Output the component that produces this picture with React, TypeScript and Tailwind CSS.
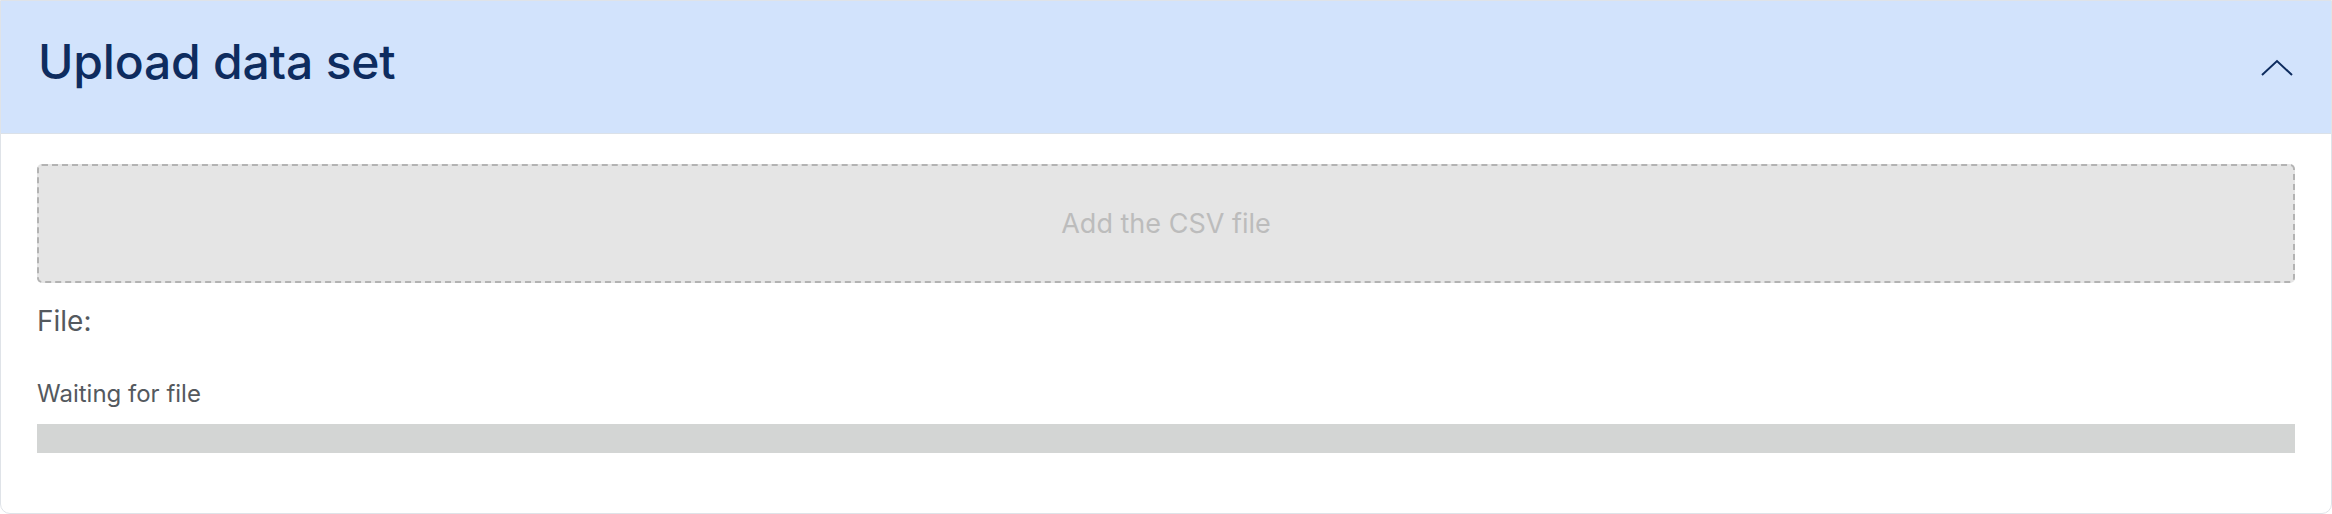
import React from 'react';

export default function App() {
  return (
    <div className="min-h-screen bg-white" style={{ fontFamily: 'Inter, "Noto Sans", sans-serif' }}>
      <div className="w-full h-[514px] border border-[#dfe3e8] rounded-b-[10px] overflow-hidden flex flex-col">
        {/* Header */}
        <div className="h-[133px] shrink-0 bg-[#d2e3fc] border-b border-[#dbe1e8] flex items-center justify-between pl-[37px] pr-[38px]">
          <h1 className="text-[48px] leading-[58px] font-medium text-[#0e2c5f] tracking-[-0.2px] pb-[10px]">Upload data set</h1>
          <svg width="32" height="18" viewBox="0 0 32 18" fill="none" className="mt-[2px]">
            <path d="M1 16 L16 2 L31 16" stroke="#0e2c5f" strokeWidth="2" />
          </svg>
        </div>

        {/* Body */}
        <div className="px-[36px] pt-[30px] flex flex-col">
          <div className="h-[119px] rounded-[5px] border-2 border-dashed border-[#b3b3b3] bg-[#e5e5e5] flex items-center justify-center">
            <span className="text-[27px] leading-[34px] text-[#bcbcbc]">Add the CSV file</span>
          </div>
          <p className="mt-[21px] text-[28px] leading-[34px] text-[#54595e]">File:</p>
          <p className="mt-[41px] text-[24px] leading-[29px] text-[#54595e]">Waiting for file</p>
          <div className="mt-[16px] h-[29px] bg-[#d3d5d4]" />
        </div>
      </div>
    </div>
  );
}
